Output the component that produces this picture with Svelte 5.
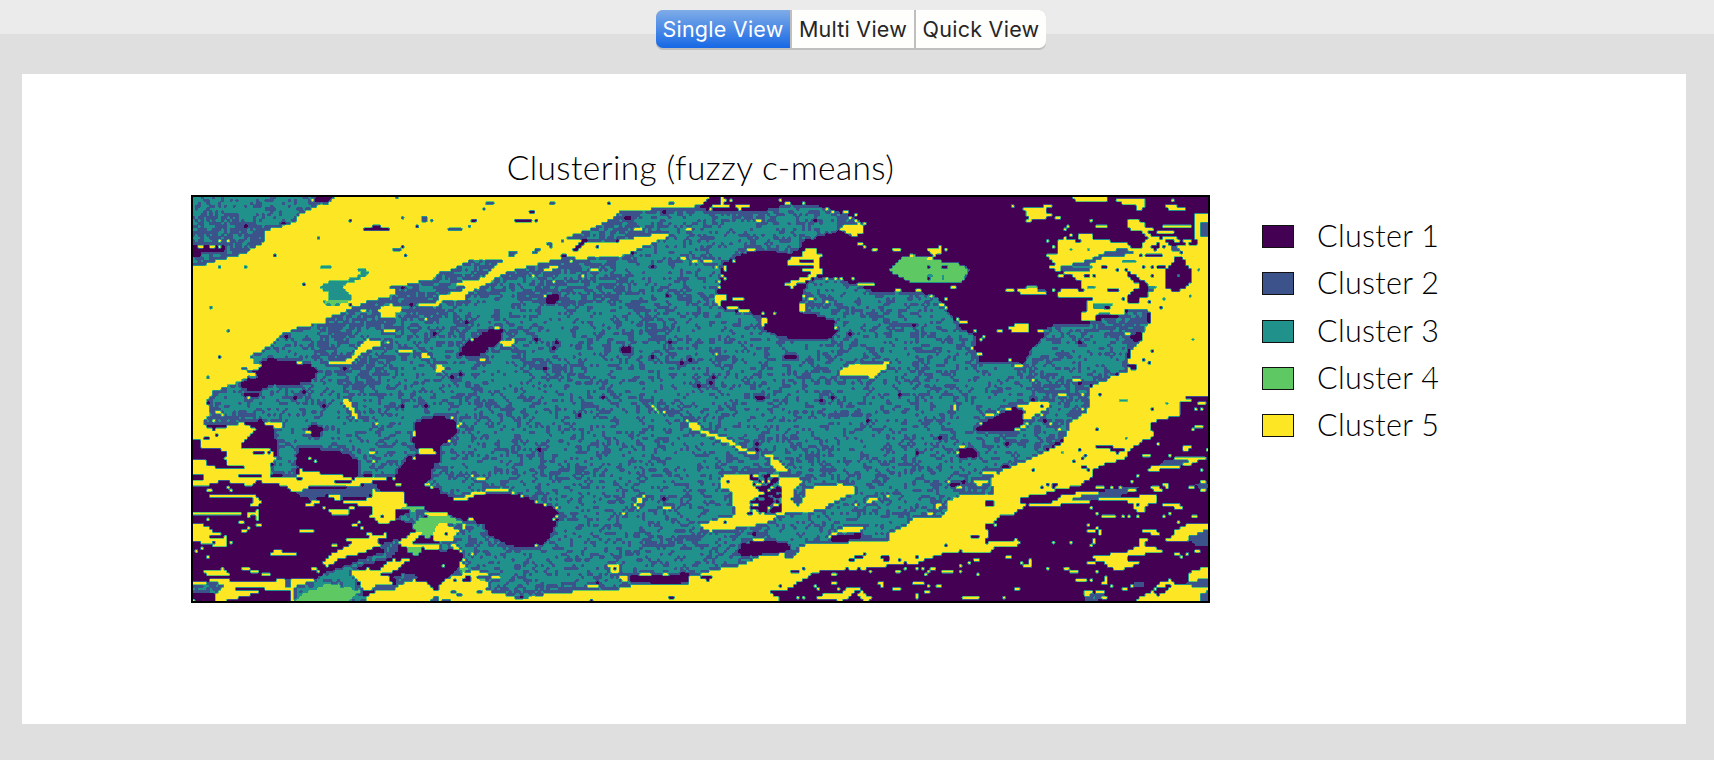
<script>
  import { onMount } from 'svelte';

  const views = ['Single View', 'Multi View', 'Quick View'];
  let active = $state(0);

  const palette = ['#440154', '#3b528b', '#21918c', '#5ec962', '#fde725'];
  const clusters = palette.map((color, i) => ({ name: `Cluster ${i + 1}`, color }));

  const COLS = 350;
  const ROWS = 140;
  const WIDTH = 1015;
  const HEIGHT = 404;
  let canvas;

  // The map is described in eight tiles, three units to a pixel.
  // P<m>: a polygon (x,y pairs). R<m>: one-cell-high runs (x,y,width).
  // Materials 0-4 are the clusters, 5 is mostly blue grain, 6 teal grain, 7 speckle.
  const tiles = [
    { x: 180, y: 185, w: 270, h: 210, base: 4, shapes: `
P6 39 30 465 30 450 52 410 65 375 80 350 92 345 112 300 125 255 138 258 165 235 182 190 208 150 215 120 225 70 242 39 245 20 245 20 30
P5 20 95 120 75 200 110 300 110 255 138 258 165 235 182 190 208 120 225 39 245 20 245
P0 20 183 130 183 130 195 65 200 60 212 20 212
P0 400 38 455 34 445 48 405 46
R4 52 181 18 90 181 16 117 172 8 117 181 8 143 172 8 395 43 8
R0 550 137 78 575 128 25 506 103 8 192 128 8 304 118 8 706 128 8 662 181 8 671 207 8 280 207 8 367 302 8 114 518 8 506 363 8
R1 662 94 8 749 103 8 802 137 8 411 163 8 192 242 8 114 250 8 89 372 8 140 441 8 79 580 8 723 94 18 723 103 18 640 190 22 646 40 10
R2 420 250 32
P2 535 248 555 248 565 265 545 280 520 290 505 295 492 305 505 325 520 345 495 350 480 362 445 362 420 355 430 350 445 345 445 325 430 316 410 312 430 295 460 285 520 280 540 265
P3 440 350 520 343 500 352 460 360
P6 810 265 770 265 765 282 710 292 700 298 645 302 620 312 655 316 655 330 600 340 560 348 520 375 495 385 470 390 435 400 435 418 360 422 330 438 300 448 275 475 250 495 212 510 220 530 215 555 180 545 195 556 235 570 200 578 150 600 120 615 98 634 810 634
P5 470 390 560 350 640 330 655 305 810 268 810 410 640 410 560 430 500 470 440 510 400 520 435 420
P5 450 520 560 500 650 510 600 600 500 625 470 580
P4 585 372 620 362 680 370 650 385 640 400 605 400 600 382
P4 610 430 655 440 610 445
P4 715 366 715 360 775 350 790 328 810 328 810 345 780 362
P4 450 540 450 532 490 532 520 510 540 482 560 463 595 465 608 478 580 490 560 495 520 527 500 542
P4 725 506 750 508 758 522 728 522
P4 760 543 790 540 792 555 775 568
R4 540 380 18 655 502 40 620 475 8 735 407 8 350 537 16 630 355 8
P0 220 562 235 540 262 523 300 525 350 533 390 542 410 562 395 585 340 600 260 602 230 618 185 608 185 588 235 580
R0 314 458 10 487 553 10 367 622 8 758 450 8 688 355 8 662 310 8
P4 215 533 255 535 235 553 218 560` },
    { x: 440, y: 140, w: 270, h: 250, base: 6, shapes: `
P5 0 390 180 360 440 360 600 330 560 370 300 420 120 470 0 520
P5 240 430 560 400 580 470 400 500 240 480
P5 430 290 540 210 810 190 810 215 600 220 580 260 680 250 560 300
P5 540 470 600 480 690 610 640 600
P5 220 630 400 690 500 740 380 720 250 660
P4 0 160 810 160 800 185 790 197 640 207 540 210 520 235 460 265 400 285 355 305 420 298 415 310 340 345 190 370 180 358 90 360 35 390 0 398
P4 0 488 0 465 60 455 80 445 45 430 80 420 130 415 150 390 190 360 240 350 300 335 340 315 380 305 420 298 440 310 500 310 560 298 640 285 670 278 692 290 660 300 620 315 580 335 540 348 460 350 425 362 400 350 360 355 320 365 240 385 190 400 150 425 100 450 75 470 80 485 30 478
P1 315 305 340 310 335 322 318 318
P1 275 345 290 322 300 325 290 345
P1 205 328 232 335 228 345 205 340
R1 205 350 16 87 255 8 22 272 18 40 264 24 130 203 8 135 194 24 327 186 16 683 186 16
R0 225 246 25 240 238 32 265 220 18 284 246 8 95 240 20 500 186 8
P0 385 332 405 325 422 302 450 303 425 315 405 338
R0 366 350 14 466 324 8 552 230 18 571 335 8 666 220 8 631 385 8 674 464 10 526 305 8
P4 580 262 600 262 620 275 580 277
P4 295 397 330 382 345 375 370 377 340 388 310 398
R4 736 272 14 388 368 8 450 394 22 424 403 8 274 411 8 334 428 8 720 351 14 755 360 14 790 368 20 310 464 8
P0 315 466 350 463 357 480 335 490 318 484
P0 62 643 66 630 90 605 150 570 187 570 180 600 140 630 110 648
P4 180 608 220 598 222 615 190 622
R4 160 566 16 118 661 16 92 601 8
P4 0 675 12 680 8 700 0 700
P0 535 626 572 623 572 640 550 640
P0 622 643 648 648 640 659
R0 74 550 8 284 602 10 343 610 10 334 628 8 308 688 8 56 705 8 31 714 8 682 603 10 744 662 8 718 671 8 770 740 8 800 180 10` },
    { x: 700, y: 140, w: 270, h: 250, base: 6, shapes: `
P5 310 440 380 470 480 510 600 545 700 580 810 600 810 620 680 590 560 555 420 515 340 500
P5 0 205 200 205 230 240 180 260 60 220
P0 0 160 810 160 810 572 790 555 765 540 740 510 720 480 700 464 660 457 600 459 520 452 480 437 420 412 360 410 335 418 312 440 308 470 300 490 310 525 360 530 400 545 410 570 395 590 330 598 260 590 210 575 185 560 195 540 180 525 110 512 60 500 45 480 60 430 70 370 100 360 150 335 200 330 260 345 300 330 310 305 360 290 420 275 460 290 490 250 460 230 400 210 380 200 260 192 210 207 30 212 0 200
P5 405 225 480 235 485 275 420 275
P4 0 170 25 170 12 192 0 190
P4 25 200 85 193 85 205 38 206 30 215 25 215
P4 60 172 68 172 82 187 62 192
P4 95 203 110 193 155 190 150 200 120 208
P4 418 268 450 268 475 248 488 252 485 280 460 292 448 280
P4 470 303 485 310 502 315 495 321 475 316
P4 685 328 728 328 720 342 705 350 690 340
R4 165 238 14 241 178 8 252 186 14 311 194 8 381 203 8 398 212 8 425 220 16 443 229 10 461 225 8 466 240 8 486 247 8 425 255 35 512 333 16 580 333 28 628 342 14 660 351 40 738 333 8 721 316 8 86 178 8
P3 565 390 600 355 640 345 700 360 800 373 815 378 815 402 780 434 740 425 650 432 600 412
R0 686 377 8 722 385 16 686 420 8
R2 682 410 16 728 403 8 728 412 8 790 375 16 798 385 12
P4 738 433 772 436 760 448
R4 590 455 16 644 455 8 660 447 8 694 464 8 738 481 8 721 490 8 729 498 8 738 507 8 766 540 8 775 550 35 451 420 8 470 429 22 495 437 24 381 412 8 399 412 8 416 412 8 381 489 8
P4 260 372 262 358 300 350 308 338 320 323 345 323 352 338 388 340 360 350 360 380 372 395 345 412 300 430 275 440 252 432 300 415 340 400 305 388 350 380
R0 296 360 42 310 395 22
P4 68 375 76 375 76 395 68 395
P4 42 460 65 460 90 475 60 482 66 502 50 495
P4 183 533 205 531 192 560 182 560
P4 295 487 312 487 312 518 302 518
P4 303 472 318 460 315 476
R4 10 368 22 45 377 12 94 360 8 140 333 22 60 403 8 68 412 8 56 425 8 51 446 10 95 480 32 80 507 38 115 515 38 181 524 8 224 524 8 322 481 14 276 446 10
P4 415 690 460 670 567 668 560 684 520 712 425 710
R0 258 655 36 444 585 10 634 558 10 34 714 8 24 730 10 338 238 8
R4 399 568 8 42 645 8` },
    { x: 960, y: 185, w: 260, h: 210, base: 0, shapes: `
P4 255 213 290 205 290 163 350 160 365 143 395 145 400 165 430 165 490 172 490 145 497 145 510 190 540 190 560 165 620 168 625 182 680 182 760 185 760 634 385 634 390 605 430 590 460 572 500 560 510 500 540 475 550 440 570 410 570 385 550 370 500 370 495 385 430 390 400 405 370 410 360 390 380 375 378 350 400 343 400 338 295 338 290 322 310 312 350 315 385 325 360 303 360 290 330 270 290 257 262 250 290 237 270 220
P6 -5 425 50 450 45 490 60 525 120 525 190 535 210 495 245 465 250 435 290 415 360 418 400 408 495 390 505 372 550 372 565 390 568 415 550 440 510 455 540 475 505 500 505 550 460 572 430 590 390 600 385 634 -5 634
P5 400 415 495 390 505 372 560 372 560 385 545 440 500 450 530 475 500 480 430 440
P5 190 540 230 570 300 600 270 634 200 634
P5 350 590 460 560 430 590 385 600 385 634 350 620
P1 290 250 330 240 400 220 440 200 490 188 525 203 520 210 440 215 400 230 380 245 400 262 320 262
R2 336 250 60 485 233 44 380 310 28 400 355 60 400 364 44 420 381 34 550 310 45
P4 330 42 345 36 445 36 445 52 360 50
P4 465 38 555 38 557 65 535 80 525 60 465 52
P4 185 66 245 66 250 58 280 58 280 64 255 70 255 85 280 88 255 100 205 100
P4 285 93 313 103 295 107
P4 603 68 620 60 645 60 650 68 697 76 660 80
P4 705 83 760 83 760 178 715 185 705 160
P4 410 118 418 125 440 118 445 130 412 130
P4 500 100 530 105 555 112 560 130 600 135 600 145 560 152 540 140 500 130
R4 605 120 85 560 155 90 640 164 22 640 128 12 158 60 8 194 103 14 393 103 8 323 128 8 315 137 8 332 147 8 308 155 8 262 172 8 280 181 8 290 268 14 635 42 10
R4 560 172 40 600 146 70 665 164 25 660 176 30
P0 615 145 690 135 690 155 660 165 690 185 665 180 650 155
P0 618 255 640 235 642 222 655 212 680 225 672 240 697 255 697 285 670 312 640 324 618 305
P0 490 248 540 280 565 295 560 330 520 352 495 350 510 320 545 305 510 280
P0 550 205 615 205 600 217 555 217
P0 497 145 525 165 545 185 520 192 495 170
P0 575 185 595 172 600 188 580 200
R0 590 245 30 546 250 8 570 250 10 370 276 20 400 276 10 445 320 35 500 350 35 466 258 8 425 250 10 574 276 8 566 353 8 602 372 8 576 500 8 549 527 8 567 536 8 437 242 12 350 164 14 410 390 70 610 181 10 540 215 8 553 119 8 520 335 40 636 235 44 660 200 8 600 155 12 560 140 30 430 372 14 488 345 10
P0 488 535 520 535 532 540 530 555 510 555 505 545
R2 332 190 8 384 190 8 698 466 8 716 258 8 688 337 8 610 345 8 654 268 8
R1 630 190 22 630 181 18 485 563 20 560 320 20
P1 725 115 760 110 760 160 725 155
P4 170 312 230 312 230 320 250 330 200 325 180 332
P3 165 308 232 306 232 314 175 314
P1 235 310 262 310 262 325 240 325
P4 143 430 165 420 210 418 210 438 160 440
R4 135 320 30 115 440 16 230 440 14 0 414 26 44 440 8 62 466 8 70 458 8 36 490 8 149 527 8 160 545 24 340 588 26 290 623 24 205 327 56 277 320 10 212 588 8
P4 45 502 62 500 70 512 50 515
P3 -5 240 15 238 30 258 15 285 -5 292
R1 20 258 12 18 250 8 18 268 8
R0 358 475 8 358 597 8
P4 480 440 505 437 515 445 500 452` },
    { x: 180, y: 390, w: 270, h: 220, base: 0, shapes: `
P4 20 -15 115 -15 85 30 85 80 65 100 100 120 140 110 190 98 215 110 235 125 190 150 180 172 270 178 290 205 270 225 275 262 240 280 210 285 100 266 75 258 20 245 20 210 75 212 80 225 140 240 190 240 195 232 140 225 135 205 145 185 100 175 60 172 65 150 20 140
R0 75 146 16 105 137 10 218 190 36 262 185 8 110 188 12 176 258 66 143 233 48 20 150 40 20 160 40
P6 115 -15 815 -15 815 90 780 82 740 85 710 100 695 140 710 170 715 195 690 200 660 235 640 265 560 255 530 265 535 215 500 195 450 180 360 178 350 200 355 235 350 262 275 255 275 225 290 205 280 100 240 92 180 98 110 100 65 105 88 75 82 30
P5 88 75 200 60 240 92 190 100 80 110
R4 104 68 18 122 77 8 98 94 8 165 120 20 155 137 16
P6 760 220 815 210 815 318 770 300 745 280
P4 240 98 305 93 303 117 265 105
P4 488 28 505 28 525 60 532 88 522 82 515 62 495 50
P4 715 170 725 178 775 180 765 195 720 188
P4 697 122 706 122 706 140 697 140
P0 190 158 240 110 275 108 285 150 292 178 240 175
P0 385 117 400 105 428 120 415 140 390 135
R4 375 128 14 384 207 8 401 215 8 583 103 8 566 190 18 575 215 8 640 262 8 697 207 8 802 155 8 738 285 20 754 295 10 652 280 8
P4 20 280 75 265 350 262 360 235 380 245 430 250 480 252 520 270 545 258 640 265 580 275 540 285 480 290 400 285 375 295 350 310 335 300 320 285 240 280 200 285 160 270 110 275 70 290 20 290
R0 460 276 50 352 270 20 225 276 20 620 262 4
P1 345 310 380 298 480 295 540 285 585 275 600 300 560 325 510 320 480 330 450 315 400 330 370 325
P4 438 320 460 310 480 318 498 320 475 330
P4 575 300 640 305 670 310 678 345 650 360 640 395 600 400 570 380 580 355 540 345 485 337 545 328 580 325
P4 445 360 507 358 505 375 455 375
P4 375 347 395 332 425 333 405 345
P4 208 318 225 318 243 333 240 347 213 345 222 332
P4 200 360 208 372 235 358 240 390 232 390 225 375 203 384
P4 20 412 85 412 105 428 145 438 137 470 85 465 70 458 20 455
R0 90 441 40 100 458 12
R4 90 320 120 39 372 145 80 303 16 141 295 8 154 300 8 79 388 8 175 398 16 225 407 16 185 424 16 360 424 40 455 467 16 515 407 16 275 493 74 282 484 30 65 475 12 79 502 8 44 484 8 148 458 8 39 405 35 201 415 8 535 398 12 427 353 8 510 353 20 395 537 16 185 537 24 210 545 30 245 553 26 544 413 10 560 432 20 570 441 55 610 432 8 500 450 100 650 280 8 415 545 8
P4 70 545 130 535 155 552 120 562 75 553
P4 20 575 130 568 200 578 320 568 400 565 400 582 330 603 240 605 200 618 105 640 20 640
P5 20 590 110 575 135 590 100 612 20 616
P1 315 570 330 570 330 590 315 590
P0 20 618 50 612 105 612 100 640 60 640
P0 165 592 255 592 255 600 165 600
P0 200 640 240 612 332 605 332 640
P4 332 595 345 595 345 640 332 640
P6 345 590 400 570 440 545 500 525 560 500 620 480 650 490 620 510 540 530 520 560 545 590 560 640 345 640
P3 340 640 370 610 400 600 440 585 500 590 540 605 520 615 500 640
P4 428 518 450 495 500 470 520 452 570 448 600 460 605 468 570 478 540 490 480 505 440 532
P4 515 545 560 535 600 540 630 512 690 508 640 545 600 555 530 572
P4 535 565 620 556 640 580 700 570 740 580 760 600 815 590 815 640 560 640 565 612 600 610 540 595
P1 560 590 620 585 690 572 640 598 600 605
P5 640 560 700 545 720 560 690 575 650 580
P4 645 465 690 430 730 425 700 460 740 465 815 455 815 480 730 475 700 470
P5 600 460 650 445 660 490 600 480
P5 640 385 690 360 740 360 720 400 690 405
P3 690 410 730 380 815 375 815 400 770 410 765 435 740 447 720 430
P4 768 412 815 402 815 440 790 452 755 448
P3 660 350 720 345 740 360 690 363
P3 660 478 720 470 730 480 710 495
P1 740 640 760 622 815 625 815 640
P0 195 10 235 8 240 20 200 22
R0 341 25 8 663 50 8 732 50 10 428 50 8 80 42 8 367 7 10 600 380 10
R4 200 25 8 730 372 80 780 484 10 785 528 8 640 510 10` },
    { x: 440, y: 390, w: 270, h: 220, base: 6, shapes: `
P5 560 465 700 440 810 430 810 455 600 475
P5 160 585 420 575 400 600 220 610
P5 550 0 640 20 760 90 740 110 640 60
P5 0 20 100 10 240 60 120 50
P0 -15 82 35 85 55 105 45 135 25 155 -15 172
P0 -15 305 40 325 80 325 130 312 220 310 290 338 345 355 355 385 335 425 310 460 250 475 190 455 150 435 130 400 70 390 30 375 -15 370
R4 40 327 40 75 320 25 90 312 45 135 303 70 213 312 8 239 320 8 283 337 8 309 345 8 343 353 8 343 380 8 334 388 8 283 467 8 31 86 8 57 103 8 48 112 8 22 155 8 0 372 28
P3 -15 378 30 378 75 400 40 402 -15 402
P4 -15 402 45 408 55 425 35 455 -15 458
P1 40 408 65 408 65 420 45 420
P4 30 460 45 460 72 485 68 495 40 480
P0 -15 490 40 480 65 485 70 510 55 530 20 570 -15 590
R4 65 403 8 65 412 8 65 510 8 60 520 8 60 528 14 4 528 8
R0 13 432 8
P4 -15 592 25 565 90 545 105 540 150 555 110 560 120 572 150 580 130 600 200 615 240 628 320 612 400 605 525 600 600 580 750 580 750 558 815 558 815 640 -15 640
P3 55 535 85 535 75 550
P3 100 565 140 565 130 575
R0 65 575 22 80 562 18 38 572 8 245 622 8 685 622 16 448 632 10 464 580 12
R1 30 605 16 48 614 18 10 628 28 110 605 20
P0 570 555 750 553 750 575 720 580 635 580 575 572
R0 795 566 20
R4 600 553 34 665 553 16 440 588 32 795 553 20
P4 500 523 535 523 535 550 510 550 510 532
R0 516 536 8
P4 537 560 567 556 567 574 550 572
P4 742 100 770 96 785 113 815 122 815 132 790 132 765 122 748 112
R4 630 50 8 639 60 8 665 68 8 734 94 8 587 328 16 587 337 16 604 320 8 578 346 8 587 354 8 544 371 8 665 354 24 788 405 24 788 414 24 82 390 18 91 258 8 108 267 24 155 562 24 91 493 8
R3 648 68 8
R0 291 180 10 414 76 10 482 25 8 666 328 8` },
    { x: 700, y: 390, w: 270, h: 220, base: 6, shapes: `
P5 40 230 250 235 260 250 60 255
P5 285 290 330 290 300 350 270 340
P5 250 110 400 240 380 260 300 170
P4 -15 113 40 133 80 143 110 163 138 180 130 187 90 162 40 144 -15 126
R4 145 190 28
P4 183 193 212 193 228 210 262 238 260 248 235 245 215 225 210 205
P4 60 265 90 250 225 250 250 262 300 265 310 275 285 300 275 330 295 355 310 330 320 300 360 285 430 283 470 295 460 310 400 335 375 355 330 365 240 372 200 400 100 415 10 418 5 405 65 385 110 378 100 340 95 305 60 290
P7 150 256 232 258 245 300 242 365 205 380 145 372 150 335 185 310 160 290
P5 278 310 300 300 305 330 290 350 275 330
R0 77 276 8 68 397 8 156 432 8 164 163 8 164 181 8 164 25 26 155 268 18 180 290 30 215 300 26 190 310 34 180 320 30 220 322 20 172 340 34 165 355 26 225 350 18 175 365 16
R4 24 424 10 155 450 32
P0 113 490 130 460 190 453 265 462 270 480 250 488 190 492 150 500
P4 -15 557 50 538 130 525 180 500 250 490 265 502 300 475 320 465 430 460 480 450 570 455 565 435 630 400 640 385 720 380 745 360 738 330 815 318 815 640 -15 640
P1 255 482 290 475 300 485 280 502 255 502
P0 200 607 260 597 310 570 350 545 480 540 520 530 650 520 740 485 815 485 815 640 240 640 235 622
P0 385 448 400 438 480 430 485 440 430 452
P4 383 442 420 415 487 410 482 425 410 432 390 445
P0 12 562 38 562 30 573 18 573
P4 345 630 355 615 430 610 440 595 475 597 455 615 430 632
P4 470 610 495 612 518 622 500 636 480 625
P4 535 575 545 575 553 590 540 588
P4 665 560 672 548 700 538 680 558
R4 435 597 40 395 553 16 390 579 14 590 545 18 611 540 12 646 537 8 661 537 8 690 537 20 728 545 34 640 579 34 686 588 8 705 588 14 580 600 26 651 610 8 646 622 8 781 528 8 346 588 8 354 597 8 675 606 14 510 545 8 482 606 10 288 622 8 305 622 8 410 597 8
R0 275 545 24 460 503 30 450 512 16 540 503 24 550 510 20 494 495 8 591 512 8 651 502 8 738 467 8 616 520 8 303 537 8 234 588 8 441 537 8 0 566 4 470 537 10
R4 764 50 8 764 59 8 510 328 24 498 337 14 564 320 8 468 346 8 705 346 14 712 354 8 678 372 18
P0 745 287 780 275 800 275 795 292 755 292
R4 765 295 24 785 172 16 771 190 8 785 198 12 745 275 8 792 275 8
P0 780 180 815 172 815 198 790 198
R0 356 33 8 391 25 10 598 16 8 503 94 10 718 147 10 651 190 8` },
    { x: 960, y: 390, w: 260, h: 220, base: 0, shapes: `
P4 385 -15 760 -15 760 15 680 18 655 45 660 80 605 85 570 100 568 112 585 125 580 140 555 150 510 180 495 205 430 225 395 240 400 258 350 290 290 298 240 315 180 322 185 340 215 350 180 355 160 372 120 375 110 395 75 405 88 435 75 458 180 455 165 470 105 475 90 488 25 488 -15 480 -15 315 100 310 85 260 130 235 210 208 310 160 330 100 385 60
P6 -15 -15 392 -15 385 60 330 100 320 140 270 175 210 210 130 240 90 265 100 310 80 318 -15 318
P5 250 -15 392 -15 385 60 330 100 320 140 300 130 330 60 270 40
P5 -15 255 90 262 100 300 80 312 -15 312
P0 60 105 100 85 140 65 160 55 185 60 190 85 180 120 130 125 50 122
P4 180 92 200 60 165 52 230 32 262 32 270 48 235 70 205 90
R0 245 50 8 253 95 10 140 163 8 219 33 8 125 233 14 7 276 8
R4 55 100 8 75 78 28 115 68 10 140 60 16 165 120 20 185 112 16 265 103 12 292 120 8 292 10 24 295 16 16 360 16 12 368 60 8 388 60 10 0 172 18 20 198 8 0 198 8 65 250 40 40 276 40 50 285 20 0 295 8 200 103 8 238 77 8
P0 403 163 440 165 500 180 470 190 445 178 405 175
P0 80 335 105 335 105 350 80 350
P0 -15 178 30 172 55 198 40 205 -15 205
R2 475 33 30 498 146 8 619 42 8 306 190 8 500 297 10
R0 418 16 8 576 60 8 410 120 8 358 181 8 341 215 8 219 241 8 375 198 8 368 207 8 246 293 8 360 233 18 384 238 10 30 441 30 92 405 10 255 285 8 380 241 8
P0 270 290 275 277 298 275 290 286 280 300
P4 187 347 280 335 300 320 340 310 420 302 440 310 410 325 590 316 592 340 558 345 550 372 525 360 515 342 400 335 300 345 260 352
P1 315 325 410 312 440 298 520 285 545 290 490 318 380 332
R0 260 337 8 278 330 8 420 340 90 530 345 12
R4 515 276 8 410 294 22 455 294 8 473 294 8 500 302 22 605 285 14 575 293 22 580 302 30
P4 560 242 570 232 600 228 600 215 640 205 720 198 744 203 700 218 690 225 640 235 600 240
P1 600 222 620 208 690 208 670 225 620 228
R4 545 198 30 612 345 55 640 354 30 422 380 40 489 380 8 506 380 8 532 380 8 610 380 8 698 380 16 628 372 8 393 354 8 410 372 8 654 398 8 665 33 22 715 42 24 706 60 8 724 60 8 705 112 28 698 120 8 593 163 8 628 198 8 736 180 8 724 241 8 690 293 14 720 276 14 724 302 14 619 293 8 532 258 8
P4 665 182 670 168 697 163 685 180
P1 705 283 760 283 760 297 710 297
P4 635 442 640 425 680 405 760 400 760 430 690 453 610 453
P1 690 440 744 415 760 425 760 470 710 470 690 450
P4 540 422 590 420 602 440 565 430
P4 400 500 415 500 450 492 500 485 540 465 535 448 562 446 552 470 590 475 630 492 560 492 500 495 500 510 540 515 520 530 475 542 440 525 430 510 405 510
R4 640 493 20 663 500 8 675 492 12 708 484 14 378 520 24 350 571 34 393 571 8 310 537 20 325 545 24 410 545 8 262 537 8 436 565 8 436 572 8 425 580 14 454 588 8 490 597 18 160 597 14 10 623 50 132 622 8 140 502 16 38 510 14 22 519 12 2 528 8 2 545 8 46 553 8 177 519 8 280 458 8 332 458 8 400 450 8 396 458 8 393 467 8 384 407 8 408 415 12 378 424 24 418 424 8 418 432 8 166 449 8 106 407 8 508 588 8
P4 190 528 210 520 208 505 217 505 217 518 208 532
P4 515 640 545 620 570 605 600 580 635 568 640 585 680 585 690 545 720 535 760 530 760 640
P1 680 578 720 570 760 560 760 590 700 597
P1 725 610 760 600 760 640 725 640
P0 580 605 600 592 635 585 615 605 595 620
P5 365 640 380 612 430 608 440 620 400 640
R4 370 606 22 375 614 18 410 606 26 425 620 18
P1 515 583 530 576 557 578 555 590 520 590` }
  ];

  function noise(x, y, seed) {
    let h = Math.imul(x + 101, 374761393) ^ Math.imul(y + 57, 668265263) ^ Math.imul(seed, 1442695041);
    h = Math.imul(h ^ (h >>> 13), 1274126177);
    h = Math.imul(h ^ (h >>> 16), 2246822519);
    return ((h ^ (h >>> 15)) >>> 0) / 4294967296;
  }

  function inside(px, py, p) {
    let hit = false;
    for (let i = 0, j = p.length - 2; i < p.length; j = i, i += 2) {
      if (p[i + 1] > py !== p[j + 1] > py &&
          px < ((p[j] - p[i]) * (py - p[i + 1])) / (p[j + 1] - p[i + 1]) + p[i]) hit = !hit;
    }
    return hit;
  }

  function buildCells() {
    const cw = 1017 / COLS;
    const ch = 406 / ROWS;
    const raw = new Uint8Array(COLS * ROWS);
    for (const tile of tiles) {
      const x0 = Math.max(0, Math.round((tile.x - 192) / cw));
      const x1 = Math.min(COLS, Math.ceil((tile.x + tile.w - 192) / cw));
      const y0 = Math.max(0, Math.round((tile.y - 196) / ch));
      const y1 = Math.min(ROWS, Math.ceil((tile.y + tile.h - 196) / ch));
      for (let y = y0; y < y1; y++) raw.fill(tile.base, y * COLS + x0, y * COLS + x1);
      for (const line of tile.shapes.trim().split('\n')) {
        const m = +line[1];
        const n = line.slice(3).split(' ').map(Number);
        if (line[0] === 'P') {
          for (let y = y0; y < y1; y++) {
            for (let x = x0; x < x1; x++) {
              const px = (192 + (x + 0.5) * cw - tile.x) * 3;
              const py = (196 + (y + 0.5) * ch - tile.y) * 3;
              if (inside(px, py, n)) raw[y * COLS + x] = m;
            }
          }
        } else {
          for (let i = 0; i < n.length; i += 3) {
            const y = Math.floor((tile.y + n[i + 1] / 3 - 196) / ch);
            const from = Math.floor((tile.x + (n[i] + 4) / 3 - 192) / cw);
            const count = Math.max(1, Math.round(n[i + 2] / 8.7));
            if (y < 0 || y >= ROWS) continue;
            for (let x = Math.max(0, from); x < Math.min(COLS, from + count); x++) raw[y * COLS + x] = m;
          }
        }
      }
    }
    const cells = new Uint8Array(raw.length);
    for (let y = 0; y < ROWS; y++) {
      for (let x = 0; x < COLS; x++) {
        const k = y * COLS + x;
        const m = raw[k];
        if (m < 5) { cells[k] = m; continue; }
        const r = noise(x, y, 1);
        if (m === 7) { cells[k] = r < 0.5 ? 0 : r < 0.68 ? 2 : r < 0.78 ? 1 : 4; continue; }
        const grain = 0.66 * r + 0.34 * noise(x >> 1, y, 2);
        let share = (m === 5 ? 0.58 : 0.335) + 0.1 * (noise(x >> 3, y >> 2, 3) - 0.5);
        for (const [dx, dy] of [[1, 0], [-1, 0], [0, 1], [0, -1]]) {
          const nx = x + dx;
          const ny = y + dy;
          if (nx < 0 || ny < 0 || nx >= COLS || ny >= ROWS) continue;
          const o = raw[ny * COLS + nx];
          if (o === 0 || o === 4) share = 0.82;
        }
        cells[k] = grain < share ? 1 : 2;
      }
    }
    return cells;
  }

  onMount(() => {
    const cells = buildCells();
    const ctx = canvas.getContext('2d');
    const img = ctx.createImageData(WIDTH, HEIGHT);
    const rgb = palette.map((c) => [1, 3, 5].map((i) => parseInt(c.slice(i, i + 2), 16)));
    const weight = (t) => 0.5 + 0.5 * Math.cos(Math.PI * t);
    const clamp = (v, max) => Math.min(max, Math.max(0, v));
    for (let y = 0; y < HEIGHT; y++) {
      const v = ((y + 1.5) / 406) * ROWS - 0.5;
      const iy = Math.floor(v);
      const wy = weight(v - iy);
      const a = clamp(iy, ROWS - 1) * COLS;
      const b = clamp(iy + 1, ROWS - 1) * COLS;
      for (let x = 0; x < WIDTH; x++) {
        const u = ((x + 1.5) / 1017) * COLS - 0.5;
        const ix = Math.floor(u);
        const wx = weight(u - ix);
        const l = clamp(ix, COLS - 1);
        const r = clamp(ix + 1, COLS - 1);
        const value = wy * (wx * cells[a + l] + (1 - wx) * cells[a + r]) +
          (1 - wy) * (wx * cells[b + l] + (1 - wx) * cells[b + r]);
        const c = rgb[Math.min(4, Math.floor((value / 4) * 5))];
        const o = (y * WIDTH + x) * 4;
        img.data[o] = c[0];
        img.data[o + 1] = c[1];
        img.data[o + 2] = c[2];
        img.data[o + 3] = 255;
      }
    }
    ctx.putImageData(img, 0, 0);
  });
</script>

<div class="window">
  <header>
    <div class="tabs">
      {#each views as view, i}
        <button class:active={active === i} onclick={() => (active = i)}>{view}</button>
      {/each}
    </div>
  </header>
  <main>
    <figure>
      <figcaption>Clustering (fuzzy c-means)</figcaption>
      <canvas bind:this={canvas} width={WIDTH} height={HEIGHT}></canvas>
    </figure>
    <ul>
      {#each clusters as cluster}
        <li><i style:background={cluster.color}></i><span>{cluster.name}</span></li>
      {/each}
    </ul>
  </main>
</div>

<style>
  :global(body) { margin: 0; background: #dfdfdf; }
  .window {
    box-sizing: border-box;
    width: 1714px;
    height: 760px;
    overflow: hidden;
    background: linear-gradient(#ebebeb 34px, #dfdfdf 34px);
  }
  header {
    box-sizing: border-box;
    height: 74px;
    padding: 10px 0 0 656px;
  }
  .tabs {
    display: grid;
    grid-template-columns: 134px 122px 130px;
    gap: 2px;
    width: 390px;
    height: 38px;
    border-radius: 7px;
    overflow: hidden;
    background: #bfbfbf;
    box-shadow: 0 2px 0 #bfbfbf;
  }
  button {
    border: 0;
    padding: 0;
    background: #fefefc;
    color: #262626;
    font: 21.5px/38px Inter, sans-serif;
    letter-spacing: 0.25px;
    white-space: nowrap;
    text-align: center;
  }
  .active { background: linear-gradient(#7face8, #1768e5); color: #fff; }
  main {
    box-sizing: border-box;
    display: flex;
    width: 1664px;
    height: 650px;
    margin-left: 22px;
    padding: 72px 0 0 169px;
    background: #fff;
    font-family: Lato, sans-serif;
    font-weight: 300;
    color: #000;
  }
  figure { margin: 0; width: 1019px; }
  figcaption {
    height: 49px;
    line-height: 42px;
    font-size: 33.5px;
    letter-spacing: 0.4px;
    text-align: center;
    white-space: nowrap;
  }
  canvas { display: block; border: 2px solid #000; }
  ul { list-style: none; margin: 67px 0 0 52px; padding: 0; }
  li { display: flex; align-items: center; height: 47.25px; }
  i {
    box-sizing: border-box;
    width: 32px;
    height: 23px;
    border: 1.5px solid #111;
  }
  span {
    margin: -3px 0 0 23px;
    font-size: 30.5px;
    letter-spacing: 0.3px;
    line-height: 40px;
    white-space: nowrap;
  }
</style>
